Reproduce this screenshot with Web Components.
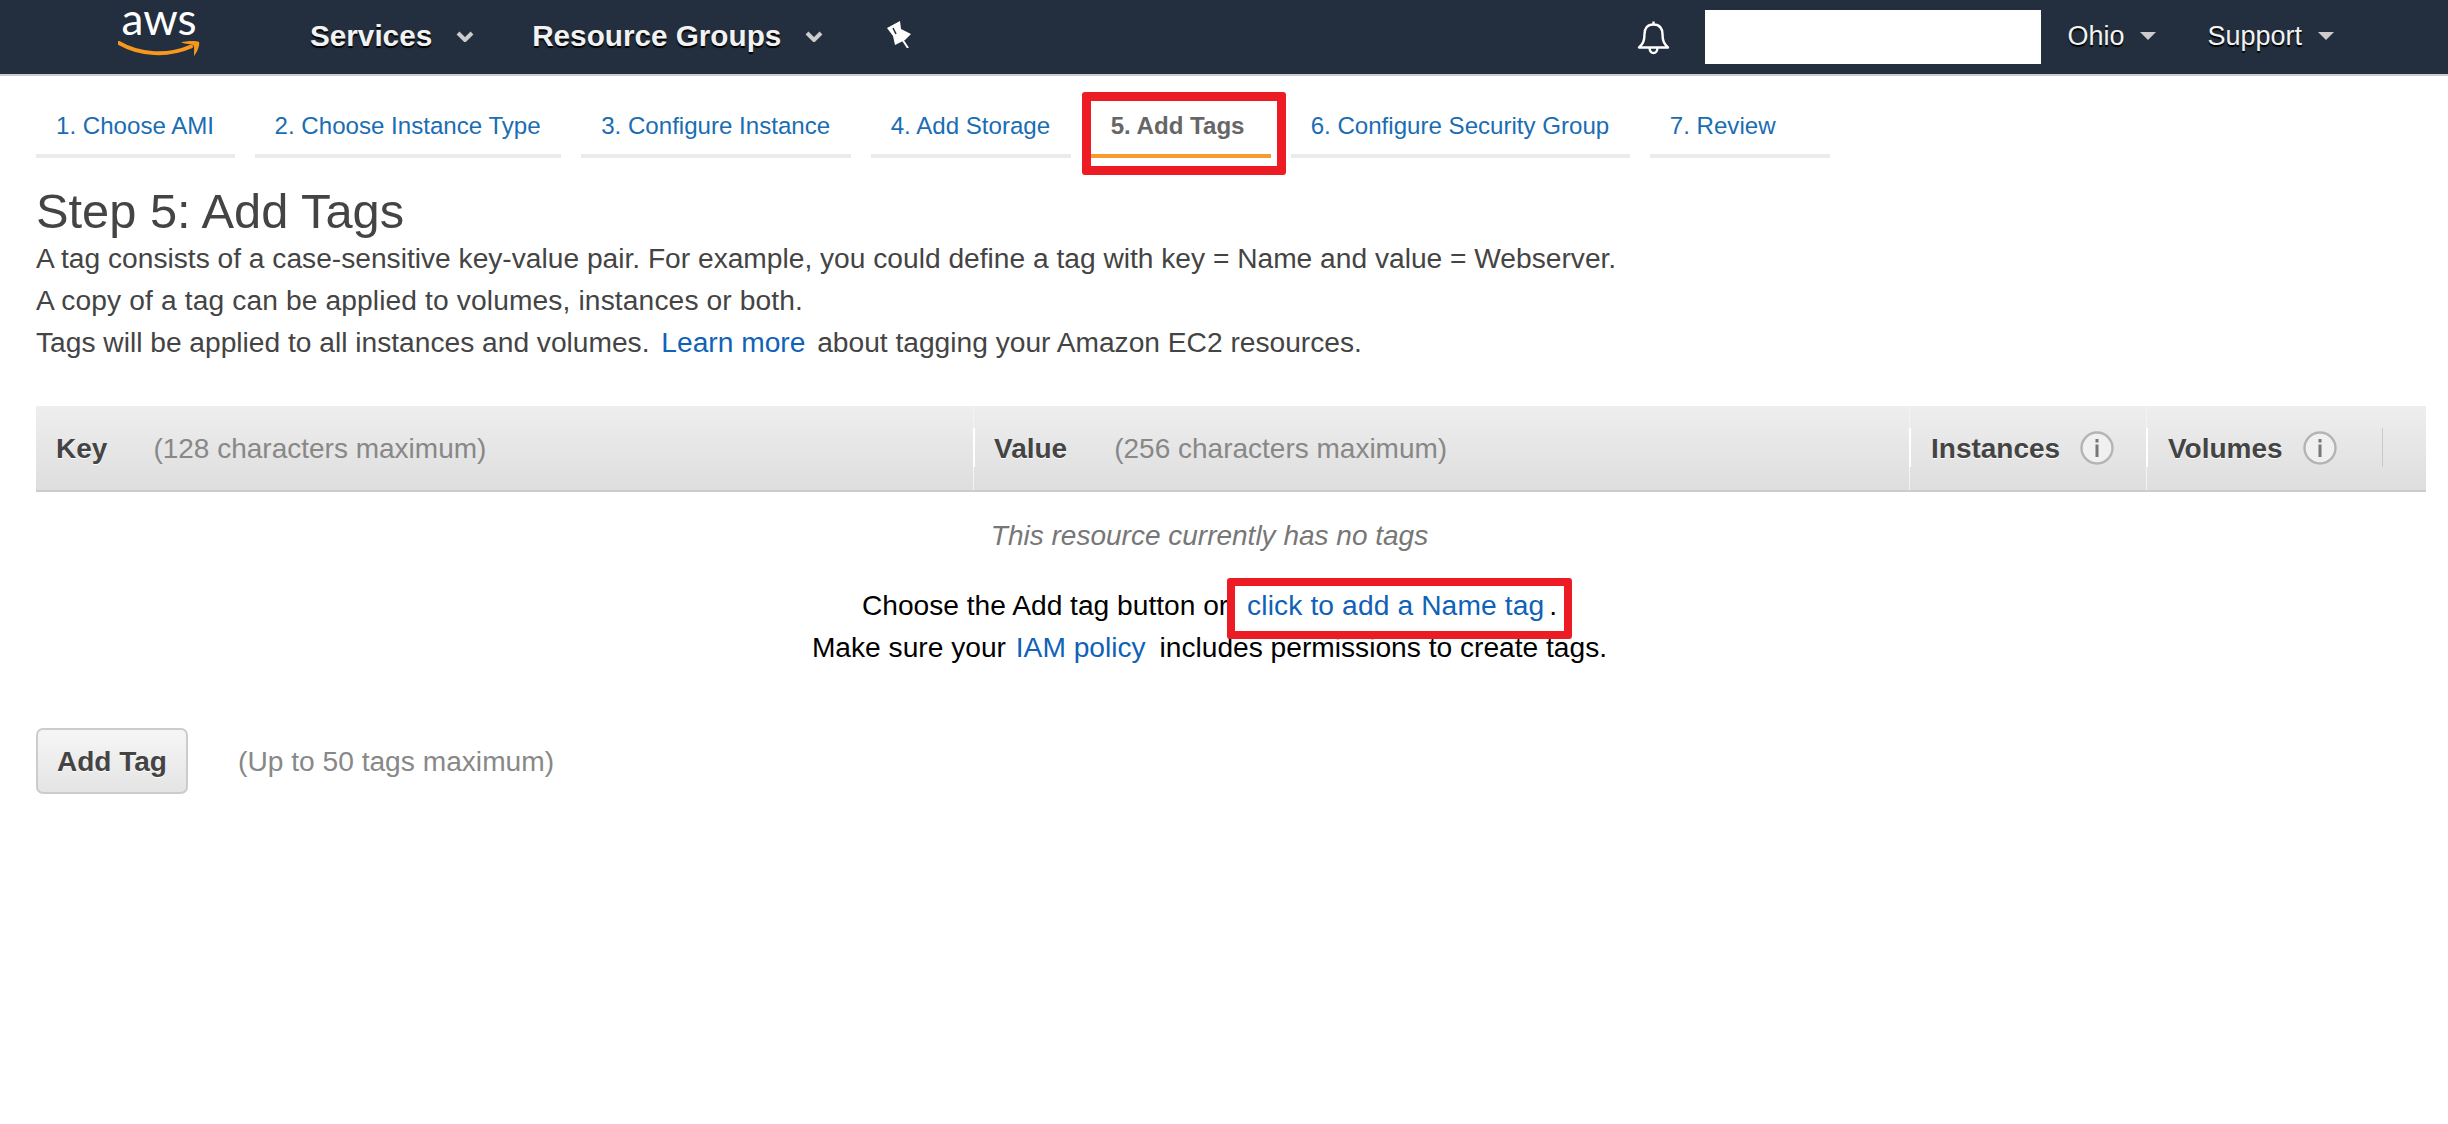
<!DOCTYPE html>
<html>
<head>
<meta charset="utf-8">
<title>Step 5: Add Tags</title>
<style>
  body {
    margin: 0;
    background: #fff;
    font-family: "Liberation Sans", Arial, sans-serif;
    color: #444;
  }
</style>
</head>
<body>
<aws-topbar>
  <nav-menu slot="left" style="margin-left:110px">Services</nav-menu>
  <nav-menu slot="left" style="margin-left:58px">Resource Groups</nav-menu>
  <nav-small style="margin-left:26px">Ohio</nav-small>
  <nav-small style="margin-left:51px">Support</nav-small>
</aws-topbar>
<wizard-tabs>
  <wizard-tab>1. Choose AMI</wizard-tab>
  <wizard-tab>2. Choose Instance Type</wizard-tab>
  <wizard-tab>3. Configure Instance</wizard-tab>
  <wizard-tab>4. Add Storage</wizard-tab>
  <wizard-tab active>5. Add Tags</wizard-tab>
  <wizard-tab>6. Configure Security Group</wizard-tab>
  <wizard-tab>7. Review</wizard-tab>
</wizard-tabs>
<step-intro></step-intro>
<tag-table></tag-table>
<add-tag-row></add-tag-row>

<script>
class AwsTopbar extends HTMLElement {
  connectedCallback() {
    if (this.shadowRoot) return;
    this.attachShadow({ mode: 'open' });
    this.shadowRoot.innerHTML = `
      <style>
        :host {
          display: flex;
          align-items: center;
          height: 74px;
          padding: 0 114px 0 118px;
          background: #232f3e;
          border-bottom: 2px solid #ccc;
        }
        .logo {
          position: relative;
          width: 82px;
          height: 74px;
          flex: none;
        }
        .logo span {
          display: block;
          padding-top: 2px;
          text-align: center;
          font: 400 44px/32px Lato, sans-serif;
          color: #fff;
        }
        .logo svg { position: absolute; left: 0; top: 41px; }
        .pin { margin: 0 0 6px 63px; flex: none; }
        .right {
          margin-left: auto;
          display: flex;
          align-items: center;
        }
        .search {
          width: 336px;
          height: 54px;
          margin-left: 35px;
          background: #fff;
        }
      </style>
      <div class="logo">
        <span>aws</span>
        <svg width="82" height="16" viewBox="0 0 82 16">
          <path d="M0 1.500C22 14.500 50 15.500 73 5.500" fill="none" stroke="#f7981d" stroke-width="4" stroke-linecap="round"/>
          <path d="M63 1.500C68 0 78 -.5 81 1C82 4 79.500 11 76 15C76 10 76.500 6 75.500 4.500C74 3 68 3 63 1.500Z" fill="#f7981d"/>
        </svg>
      </div>
      <slot name="left"></slot>
      <svg class="pin" width="26" height="28" viewBox="0 0 26 28">
        <path d="M1 8L14 1L15 9L25 14L19 20L9 25L7 16Z" fill="#fff"/>
        <path d="M7 8L10 14" stroke="#232f3e" stroke-width="1.500"/>
        <path d="M16 19L22 28" stroke="#fff" stroke-width="2"/>
      </svg>
      <div class="right">
        <svg width="33" height="35" viewBox="0 0 33 35">
          <path d="M16.500 1.500V4.500M16.500 4.500C10 4.500 7.500 9 7.500 14C7.500 21 6 24 2 27.500H31C27 24 25.500 21 25.500 14C25.500 9 23 4.500 16.500 4.500ZM12.500 28C12.800 31 14.500 33 16.500 33C18.500 33 20.200 31 20.500 28" fill="none" stroke="#fff" stroke-width="2.400" stroke-linejoin="round"/>
        </svg>
        <div class="search"></div>
        <slot></slot>
      </div>
    `;
  }
}

class NavMenu extends HTMLElement {
  connectedCallback() {
    if (this.shadowRoot) return;
    this.attachShadow({ mode: 'open' });
    this.shadowRoot.innerHTML = `
      <style>
        :host {
          display: inline-flex;
          align-items: center;
          padding-bottom: 2px;
          font: bold 29.700px/34px "Liberation Sans", Arial, sans-serif;
          color: #f2f2f2;
          text-shadow: 0 2px 1px #000;
        }
        svg { margin-left: 24px; }
      </style>
      <slot></slot>
      <svg width="18" height="11" viewBox="0 0 18 11"><path d="M2 2L9 9L16 2" fill="none" stroke="#ccc" stroke-width="4"/></svg>
    `;
  }
}

class NavSmall extends HTMLElement {
  connectedCallback() {
    if (this.shadowRoot) return;
    this.attachShadow({ mode: 'open' });
    this.shadowRoot.innerHTML = `
      <style>
        :host {
          display: inline-flex;
          align-items: center;
          padding-bottom: 3px;
          font: 27px/34px "Liberation Sans", Arial, sans-serif;
          color: #f2f2f2;
          text-shadow: 0 2px 1px #000;
        }
        svg { margin-left: 16px; }
      </style>
      <slot></slot>
      <svg width="16" height="8" viewBox="0 0 16 8"><path d="M0 0H16L8 8Z" fill="#ccc"/></svg>
    `;
  }
}

class WizardTabs extends HTMLElement {
  connectedCallback() {
    if (this.shadowRoot) return;
    this.attachShadow({ mode: 'open' });
    this.shadowRoot.innerHTML = `
      <style>
        :host {
          display: flex;
          gap: 20px;
          padding: 32px 0 0 36px;
        }
      </style>
      <slot></slot>
    `;
  }
}

class WizardTab extends HTMLElement {
  connectedCallback() {
    if (this.shadowRoot) return;
    this.attachShadow({ mode: 'open' });
    this.shadowRoot.innerHTML = `
      <style>
        :host {
          display: block;
          position: relative;
          min-width: 139.500px;
          padding: 0 20.500px 10px 20px;
          font: 24.100px/36px "Liberation Sans", Arial, sans-serif;
          color: #1a6db3;
          border-bottom: 4px solid #ebebeb;
        }
        :host([active]) {
          color: #666;
          font-weight: bold;
          border-bottom-color: #f99a2e;
        }
        .mark {
          display: none;
          position: absolute;
          left: -9px;
          right: -15px;
          top: -16px;
          bottom: -21px;
          border: 9px solid #ed1c24;
          border-radius: 3px;
        }
        :host([active]) .mark { display: block; }
      </style>
      <slot></slot>
      <div class="mark"></div>
    `;
  }
}

class StepIntro extends HTMLElement {
  connectedCallback() {
    if (this.shadowRoot) return;
    this.attachShadow({ mode: 'open' });
    this.shadowRoot.innerHTML = `
      <style>
        :host {
          display: block;
          padding: 27px 0 0 36px;
          color: #444;
          font: 28.160px/42px "Liberation Sans", Arial, sans-serif;
        }
        h1 {
          margin: 0 0 1px;
          font: 48.800px/52px "Liberation Sans", Arial, sans-serif;
        }
        .wide { letter-spacing: .13px; }
        a { color: #0f62b8; text-decoration: none; margin: 0 4px; }
      </style>
      <h1>Step 5: Add Tags</h1>
      <div>A tag consists of a case-sensitive key-value pair. For example, you could define a tag with key = Name and value = Webserver.</div>
      <div class="wide">A copy of a tag can be applied to volumes, instances or both.</div>
      <div>Tags will be applied to all instances and volumes. <a href="#">Learn more</a> about tagging your Amazon EC2 resources.</div>
    `;
  }
}

class InfoIcon extends HTMLElement {
  connectedCallback() {
    if (this.shadowRoot) return;
    this.attachShadow({ mode: 'open' });
    this.shadowRoot.innerHTML = `
      <style>:host { display: inline-flex; }</style>
      <svg width="34" height="34" viewBox="0 0 34 34">
        <circle cx="17" cy="17" r="15.500" fill="#f0f0f0" stroke="#b4b4b4" stroke-width="2.400"/>
        <rect x="15.500" y="8" width="3" height="3.500" fill="#777"/>
        <rect x="15.500" y="13.500" width="3" height="12.500" fill="#777"/>
      </svg>
    `;
  }
}

class TagTable extends HTMLElement {
  connectedCallback() {
    if (this.shadowRoot) return;
    this.attachShadow({ mode: 'open' });
    this.shadowRoot.innerHTML = `
      <style>
        :host {
          display: block;
          margin: 42px 22px 0 36px;
          font: 28.160px/42px "Liberation Sans", Arial, sans-serif;
        }
        .head {
          display: grid;
          grid-template-columns: 937px 936px 237px 237px 43px;
          height: 84px;
          background: linear-gradient(#eeeeee, #dedede);
          border-bottom: 2px solid #ccc;
          font-size: 28px;
        }
        .cell {
          display: flex;
          align-items: center;
          position: relative;
          padding-left: 21px;
          box-sizing: border-box;
          border-left: 1px solid #f3f3f3;
        }
        .cell:first-child { border-left: 0; padding-left: 20px; }
        .cell.value { padding-left: 20px; }
        .cell::before {
          content: "";
          position: absolute;
          left: -1px;
          top: 22px;
          height: 39px;
          width: 2px;
          background: #fff;
        }
        .cell:first-child::before { display: none; }
        .cell:last-child::before { background: #c9c9c9; width: 1px; }
        .cell:last-child { border-left: 0; }
        b { color: #444; text-shadow: 0 1px 0 #fff; padding-top: 2px; }
        .hint { color: #888; padding-top: 2px; }
        .key .hint { margin-left: 46px; }
        .value .hint { margin-left: 47px; }
        info-icon { margin-left: 20px; }
        .empty {
          width: 2347px;
          padding-top: 23px;
          text-align: center;
          color: #000;
        }
        .none { color: #777; font-size: 28px; font-style: italic; margin-bottom: 28px; }
        a { color: #0f62b8; text-decoration: none; margin: 0 6px 0 2px; }
        .named { position: relative; }
        .named a { margin: 0 5px 0 11px; letter-spacing: .13px; }
        .mark {
          position: absolute;
          left: -9px;
          top: -12px;
          width: 345px;
          height: 61px;
          box-sizing: border-box;
          border: 8px solid #ed1c24;
          border-radius: 3px;
        }
      </style>
      <div class="head">
        <div class="cell key"><b>Key</b><span class="hint">(128 characters maximum)</span></div>
        <div class="cell value"><b>Value</b><span class="hint">(256 characters maximum)</span></div>
        <div class="cell"><b>Instances</b><info-icon></info-icon></div>
        <div class="cell"><b>Volumes</b><info-icon></info-icon></div>
        <div class="cell"></div>
      </div>
      <div class="empty">
        <div class="none">This resource currently has no tags</div>
        <div>Choose the Add tag button or <span class="named"><a href="#">click to add a Name tag</a>.<span class="mark"></span></span></div>
        <div>Make sure your <a href="#">IAM policy</a> includes permissions to create tags.</div>
      </div>
    `;
  }
}

class AddTagRow extends HTMLElement {
  connectedCallback() {
    if (this.shadowRoot) return;
    this.attachShadow({ mode: 'open' });
    this.shadowRoot.innerHTML = `
      <style>
        :host {
          display: flex;
          align-items: center;
          margin: 59px 0 0 36px;
          font: 28.160px/42px "Liberation Sans", Arial, sans-serif;
        }
        button {
          width: 152px;
          height: 66px;
          padding: 2px 0 0;
          font: bold 28px/42px "Liberation Sans", Arial, sans-serif;
          color: #444;
          text-shadow: 0 1px 0 #fff;
          background: linear-gradient(#f6f6f6, #e4e4e4);
          border: 2px solid #ccc;
          border-radius: 7px;
        }
        span { margin-left: 50px; padding-top: 2px; color: #888; }
      </style>
      <button>Add Tag</button>
      <span>(Up to 50 tags maximum)</span>
    `;
  }
}

customElements.define('aws-topbar', AwsTopbar);
customElements.define('nav-menu', NavMenu);
customElements.define('nav-small', NavSmall);
customElements.define('wizard-tabs', WizardTabs);
customElements.define('wizard-tab', WizardTab);
customElements.define('step-intro', StepIntro);
customElements.define('info-icon', InfoIcon);
customElements.define('tag-table', TagTable);
customElements.define('add-tag-row', AddTagRow);
</script>
</body>
</html>
